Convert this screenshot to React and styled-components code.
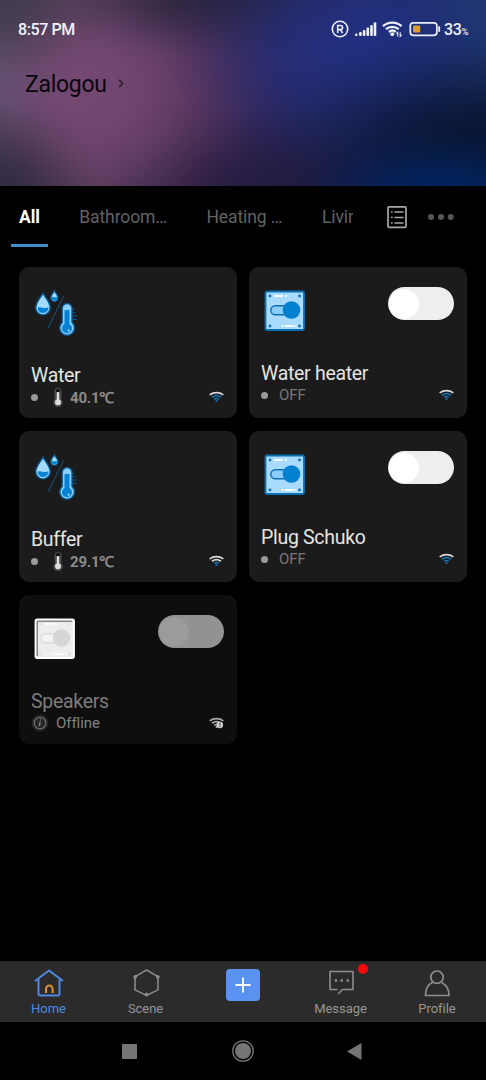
import React from 'react';
import styled, { createGlobalStyle } from 'styled-components';

const GlobalStyle = createGlobalStyle`
  * { box-sizing: border-box; }
  body { margin: 0; background: #000; font-family: Roboto, "Liberation Sans", sans-serif; }
  svg { display: block; flex: none; }
`;

const Screen = styled.div`
  width: 486px;
  height: 1080px;
  display: flex;
  flex-direction: column;
  background: #000;
  overflow: hidden;
`;

// Radial glow with a bell-shaped falloff, so that no edge shows where it ends.
const glow = (rx, ry, x, y, rgb, alpha) => {
  const stops = [0, 0.1, 0.2, 0.3, 0.4, 0.5, 0.6, 0.7, 0.8, 0.9, 1].map((t) => {
    const a = alpha * Math.pow(Math.cos((t * Math.PI) / 2), 2);
    return `rgba(${rgb}, ${a.toFixed(3)}) ${t * 100}%`;
  });
  return `radial-gradient(ellipse ${rx}px ${ry}px at ${x}px ${y}px, ${stops.join(', ')})`;
};

const Hero = styled.header`
  height: 186px;
  flex: none;
  padding: 18px 18px 0;
  background:
    ${glow(170, 80, 440, 200, '0, 38, 104', 0.85)},
    ${glow(260, 130, 486, 145, '6, 20, 48', 0.95)},
    ${glow(200, 150, 360, 50, '32, 50, 138', 0.75)},
    ${glow(190, 80, 205, -10, '34, 34, 56', 0.8)},
    ${glow(130, 90, 0, 0, '55, 52, 66', 0.7)},
    ${glow(110, 110, 0, 196, '44, 38, 60', 0.8)},
    ${glow(190, 100, 280, 200, '34, 26, 62', 0.7)},
    ${glow(185, 210, 92, 90, '122, 72, 116', 0.85)},
    linear-gradient(180deg, transparent, transparent 55%, rgba(20, 16, 36, 0.35)),
    linear-gradient(90deg, #52546c 0, #55445f 80px, #472d54 190px, #30265a 280px, #1f2a62 400px, #20386c 486px);
`;

const StatusBar = styled.div`
  height: 22px;
  display: flex;
  align-items: center;
  color: #f4f2fa;
  font-size: 16px;
  font-weight: 500;
`;

const Clock = styled.span`
  flex: 1;
  letter-spacing: -0.4px;
`;

const StatusIcons = styled.div`
  display: flex;
  align-items: center;
`;

const Charge = styled.span`
  margin-left: 2px;
  font-size: 16px;
  letter-spacing: -0.4px;
  white-space: nowrap;
  small { font-size: 9.5px; }
`;

const HomeName = styled.div`
  display: flex;
  align-items: center;
  gap: 11px;
  margin: 29px 0 0 7px;
  color: #08060b;
  font-size: 23px;
  line-height: 32px;
  letter-spacing: -0.3px;
  svg { margin-top: -3px; }
`;

const TabBar = styled.nav`
  height: 61px;
  flex: none;
  display: flex;
  padding-left: 11px;
`;

const TabList = styled.div`
  width: 342px;
  display: flex;
  gap: 23.4px;
  overflow: hidden;
`;

const Tab = styled.div`
  flex: none;
  height: 61px;
  padding: 19px 8px 0;
  font-size: 17.5px;
  line-height: 24px;
  letter-spacing: -0.08px;
  white-space: nowrap;
  font-weight: ${(p) => (p.$active ? 700 : 400)};
  color: ${(p) => (p.$active ? '#fff' : '#626262')};
  border-bottom: 3px solid ${(p) => (p.$active ? '#3f8fcb' : 'transparent')};
`;

const TabActions = styled.div`
  display: flex;
  align-items: center;
  height: 62px;
  padding-left: 33px;
  gap: 19px;
`;

const Grid = styled.main`
  flex: 1;
  display: grid;
  grid-template-columns: 217.5px 217.5px;
  grid-template-rows: 151px 151px 149px;
  gap: 13px 12.5px;
  padding: 20px 19px;
`;

const Card = styled.section`
  display: flex;
  flex-direction: column;
  border-radius: 10px;
  padding: ${(p) => (p.$sensor ? '22px' : '20px')} 12.5px 0 12px;
  background: ${(p) => (p.$offline ? '#0e0e0e' : '#1b1b1b')};
`;

const CardTop = styled.div`
  display: flex;
  justify-content: space-between;
  height: 74px;
  padding-left: 3px;
  & > svg { margin-top: ${(p) => (p.$sensor ? '0' : '3px')}; }
`;

const DeviceName = styled.div`
  font-size: 19.5px;
  line-height: 26px;
  letter-spacing: -0.3px;
  color: ${(p) => (p.$offline ? '#7c7c7c' : '#e4e4e4')};
`;

const StatusRow = styled.div`
  display: flex;
  align-items: center;
  height: 20px;
  margin-top: -2px;
  color: #7f7f7f;
  font-size: 15px;
`;

const Dot = styled.i`
  width: 7px;
  height: 7px;
  border-radius: 50%;
  background: #9a9a9a;
`;

const Reading = styled.span`
  margin-left: 6px;
  color: #8b8b8b;
  font-weight: 700;
  letter-spacing: -0.2px;
`;

const StateLabel = styled.span`
  margin-left: ${(p) => (p.$offline ? '7px' : '11px')};
  letter-spacing: -0.05px;
  color: ${(p) => (p.$offline ? '#838383' : '#777')};
`;

const Push = styled.span`
  margin-left: auto;
  margin-right: -1px;
  margin-top: -1px;
`;

const Toggle = styled.span`
  width: 66px;
  height: 33px;
  border-radius: 17px;
  display: flex;
  align-items: center;
  padding: 0 1px;
  background: ${(p) => (p.$offline ? '#929292' : '#eee')};
  &::before {
    content: '';
    width: 30px;
    height: 30px;
    border-radius: 50%;
    background: ${(p) => (p.$offline ? '#9b9b9b' : '#fff')};
  }
`;

const BottomNav = styled.nav`
  height: 61px;
  flex: none;
  display: grid;
  grid-template-columns: 97px 97px 98px 97px 96px;
  background: #2b2b2b;
  border-top: 1px solid #242424;
`;

const NavItem = styled.div`
  position: relative;
  display: flex;
  flex-direction: column;
  align-items: center;
  padding-top: 7px;
  font-size: 13px;
  line-height: 16px;
  letter-spacing: -0.05px;
  color: ${(p) => (p.$active ? '#5089e4' : '#969696')};
  svg { margin-bottom: 3px; }
`;

const Badge = styled.i`
  position: absolute;
  top: 2px;
  left: 66px;
  width: 10px;
  height: 10px;
  border-radius: 50%;
  background: #fb0808;
`;

const AddButton = styled.div`
  width: 34px;
  height: 32px;
  border-radius: 4px;
  background: #5a92f2;
  display: grid;
  place-items: center;
  svg { margin: 0; }
`;

const SystemBar = styled.footer`
  height: 58px;
  flex: none;
  display: flex;
  align-items: center;
  gap: 95px;
  padding-left: 122px;
  svg:last-child { margin-left: -2px; }
`;

function SystemIcons() {
  return (
    <StatusIcons>
      <svg width="111" height="22" viewBox="331 18 111 22" fill="none" stroke="#eceeff">
        <circle cx="340" cy="29" r="7.7" strokeWidth="1.6" />
        <path d="M337.7 33v-7.5h2.8a2 2 0 010 4.1h-2.8M340.4 29.6l2.2 3.4" strokeWidth="1.6" />
        <g stroke="none" fill="#f2f2ff">
          <circle cx="356.3" cy="34.7" r="1.3" />
          <rect x="359.1" y="32" width="2.6" height="4" rx="1" />
          <rect x="362.8" y="30" width="2.6" height="6" rx="1" />
          <rect x="366.5" y="27.5" width="2.6" height="8.5" rx="1" />
          <rect x="370.2" y="25" width="2.6" height="11" rx="1" />
          <rect x="373.7" y="22.3" width="2.6" height="13.7" rx="1" />
          <circle cx="392.3" cy="34.2" r="1.9" />
        </g>
        <path d="M383 26.2a14 14 0 0118.6 0M385.9 29.2a10 10 0 0112.8 0M388.9 32a5.5 5.5 0 016.9 0" strokeWidth="2.4" />
        <path d="M397.7 36.6v-4l-1.3 1.3M400.2 32.3v4l1.4-1.4" strokeWidth="1.1" />
        <rect x="410.3" y="22.8" width="26.6" height="12.5" rx="3" strokeWidth="1.7" />
        <rect x="413" y="25.5" width="7.2" height="7" rx="1" fill="#e29c28" stroke="none" />
        <path d="M439.2 27.2v3.8" strokeWidth="1.8" strokeLinecap="round" />
      </svg>
      <Charge>33<small>%</small></Charge>
    </StatusIcons>
  );
}

function WaterIcon() {
  return (
    <svg width="44" height="48" viewBox="34 289 44 48">
      <path d="M43 293.300c2.600 4.800 7.200 8.900 7.200 14.400a7.200 7.200 0 01-14.400 0C35.800 302.200 40.400 298.100 43 293.300z" fill="#a3daff" stroke="#075b97" strokeWidth="1.400" />
      <path d="M37.700 307.500c3-1.300 7 2 10.800-.2 0 3.300-2 5.700-5.400 5.700s-5.400-2.500-5.400-5.500z" fill="#0782d2" />
      <path d="M54.400 290.800c1 2.500 3.500 4.200 3.500 6.900a3.500 3.500 0 01-7 0c0-2.700 2.500-4.400 3.500-6.900z" fill="#a3daff" stroke="#075b97" strokeWidth="1.300" />
      <path d="M51.700 297c1.600-.4 3.500 1 5.400 0 .2 2.400-1 3.600-2.700 3.600s-3-1.300-2.700-3.600z" fill="#0782d2" />
      <path d="M63.700 296.300L48 328" stroke="#174d70" strokeWidth="1.100" />
      <path d="M62.200 308.500a4.900 4.900 0 019.800 0v14a7.300 7.300 0 11-9.800 0z" fill="#8acfff" stroke="#075b97" strokeWidth="1.400" />
      <path d="M64.500 310h5v14a5 5 0 11-5 0z" fill="#0782d2" />
      <circle cx="68.700" cy="330.700" r="1.100" fill="#a3daff" />
      <path d="M72.800 312.500h2.500M72.800 316h4M72.800 319.500h4M72.800 309.500h1.500" stroke="#075b97" strokeWidth="1" />
    </svg>
  );
}

function PlateIcon({ offline }) {
  const c = offline
    ? { edge: '#fff', face: '#ededed', knob: '#d6d6d6', line: '#dcdcdc', shine: '#fafafa', slot: '#f4f4f4' }
    : { edge: '#0b6fb4', face: '#a9dbff', knob: '#0480d0', line: '#0f6fb2', shine: '#f5fcff', slot: '#8dcdfa' };
  return (
    <svg width="42" height="42" viewBox="0 0 42 42">
      <rect x="1.500" y="1.500" width="38.500" height="38.500" rx="1.500" fill={c.face} stroke={c.edge} strokeWidth="1.800" />
      {offline && <path d="M3.200 38V3.200h35" fill="none" stroke="#555" strokeWidth="1" />}
      <path d="M10 6h9M21 6h2M17.500 36h2M21 36h9M31 36h1.500" stroke={c.shine} strokeWidth="2" />
      <g fill={c.line}>
        <circle cx="6" cy="6" r="1.400" />
        <circle cx="35.500" cy="6" r="1.400" />
        <circle cx="6" cy="36" r="1.400" />
        <circle cx="35.500" cy="36" r="1.400" />
      </g>
      <rect x="6.800" y="15.700" width="22" height="9" rx="4.500" fill={c.slot} stroke={c.line} strokeWidth="1.400" />
      <circle cx="27.500" cy="20" r="8.800" fill={c.knob} />
    </svg>
  );
}

const ARCS = [
  'M0.700 4.900a10.500 9.500 0 0113.600 0',
  'M3 7.200a7.300 6.500 0 019 0',
  'M5.200 9.200a4 3.500 0 014.600 0',
];

function WifiMark({ colors, alert }) {
  return (
    <svg width="16" height="13" viewBox="0 0 16 13" fill="none">
      {ARCS.map((d, i) => <path key={d} d={d} stroke={colors[i]} strokeWidth="1.700" />)}
      <circle cx="7.500" cy="11" r="1" fill={colors[2]} />
      {alert && <circle cx="10.800" cy="9" r="3.300" fill="#d0d0d0" />}
      {alert && <path d="M10.900 7v2.400M10.900 10.200v1" stroke="#333" strokeWidth="1" />}
    </svg>
  );
}

function MiniThermometer() {
  return (
    <svg width="12" height="20" viewBox="0 0 12 20">
      <path d="M3 4a3 3 0 016 0v8.500a4.300 4.300 0 11-6 0z" fill="#4c4c4c" stroke="#484848" strokeWidth="1" />
      <path d="M4 5.500V3.500a2 2 0 014 0v2z" fill="#151515" />
      <path d="M6 5v10" stroke="#dedede" strokeWidth="2.400" />
      <circle cx="6" cy="15.300" r="3" fill="#dedede" />
    </svg>
  );
}

const ThermoSlot = styled.span`
  margin-left: 14px;
`;

function InfoIcon() {
  return (
    <svg width="18" height="18" viewBox="0 0 18 18" fill="none">
      <circle cx="9" cy="9" r="8.500" fill="#252525" />
      <circle cx="9" cy="9" r="5.800" stroke="#777" strokeWidth="1.100" />
      <path d="M9.600 5.300l-.2 1.200M9.100 7.800l-.7 4.400" stroke="#888" strokeWidth="1.400" />
    </svg>
  );
}

function SensorCard({ name, value, wifi }) {
  return (
    <Card $sensor>
      <CardTop $sensor><WaterIcon /></CardTop>
      <DeviceName>{name}</DeviceName>
      <StatusRow>
        <Dot />
        <ThermoSlot><MiniThermometer /></ThermoSlot>
        <Reading>{value}</Reading>
        <Push><WifiMark colors={wifi} /></Push>
      </StatusRow>
    </Card>
  );
}

function SwitchCard({ name, state, wifi, offline }) {
  return (
    <Card $offline={offline}>
      <CardTop>
        <PlateIcon offline={offline} />
        <Toggle $offline={offline} />
      </CardTop>
      <DeviceName $offline={offline}>{name}</DeviceName>
      <StatusRow>
        {offline ? <InfoIcon /> : <Dot />}
        <StateLabel $offline={offline}>{state}</StateLabel>
        <Push><WifiMark colors={wifi} alert={offline} /></Push>
      </StatusRow>
    </Card>
  );
}

const BLUE = '#1475b5';
const PALE = '#d9d9d9';

export default function App() {
  return (
    <Screen>
      <GlobalStyle />
      <Hero>
        <StatusBar>
          <Clock>8:57 PM</Clock>
          <SystemIcons />
        </StatusBar>
        <HomeName>
          Zalogou
          <svg width="6" height="9" viewBox="0 0 6 9" fill="none" stroke="#211827" strokeWidth="1.300">
            <path d="M1 .7l3.600 3.800L1 8.300" />
          </svg>
        </HomeName>
      </Hero>

      <TabBar>
        <TabList>
          <Tab $active>All</Tab>
          <Tab>Bathroom…</Tab>
          <Tab>Heating …</Tab>
          <Tab>Living</Tab>
        </TabList>
        <TabActions>
          <svg width="22" height="24" viewBox="0 0 22 24" fill="none" stroke="#a6a6a6">
            <rect x="2" y="1.800" width="18" height="20.500" rx="1" strokeWidth="1.700" />
            <path d="M8.500 7h9M8.500 12.500h9M8.500 18h9M5 7h1.700M5 12.500h1.700M5 18h1.700" strokeWidth="1.400" />
          </svg>
          <svg width="28" height="8" viewBox="0 0 28 8" fill="#565656">
            <circle cx="4" cy="4" r="3" />
            <circle cx="14" cy="4" r="3" />
            <circle cx="23.700" cy="4" r="3" />
          </svg>
        </TabActions>
      </TabBar>

      <Grid>
        <SensorCard name="Water" value="40.1℃" wifi={[PALE, BLUE, BLUE]} />
        <SwitchCard name="Water heater" state="OFF" wifi={[PALE, BLUE, BLUE]} />
        <SensorCard name="Buffer" value="29.1℃" wifi={[PALE, PALE, BLUE]} />
        <SwitchCard name="Plug Schuko" state="OFF" wifi={[PALE, BLUE, BLUE]} />
        <SwitchCard name="Speakers" state="Offline" wifi={['#aaa', '#aaa', '#aaa']} offline />
      </Grid>

      <BottomNav>
        <NavItem $active>
          <svg width="32" height="29" viewBox="0 0 32 29" fill="none" strokeWidth="2">
            <path d="M2 12L16 1.500 30 12M5.500 10.500V25a1.500 1.500 0 001.500 1.500h18a1.500 1.500 0 001.500-1.500V10.500" stroke="#5089e4" strokeLinejoin="round" />
            <path d="M13 24v-4.200a3.300 3.300 0 016.600 0V24" stroke="#dc952c" />
          </svg>
          Home
        </NavItem>
        <NavItem>
          <svg width="32" height="29" viewBox="0 0 32 29" fill="#8e8e8e" stroke="#8e8e8e">
            <path d="M16.500 1L28 7.700v13.200L16.500 26.500 5 20.900V7.700z" fill="none" strokeWidth="1.500" />
            <circle cx="5.200" cy="8" r="1.400" />
            <circle cx="27.800" cy="8" r="1.400" />
            <circle cx="16.500" cy="25.500" r="1.400" />
          </svg>
          Scene
        </NavItem>
        <NavItem>
          <AddButton>
            <svg width="16" height="16" viewBox="0 0 16 16" stroke="#fff" strokeWidth="1.800">
              <path d="M8 .5v15M.5 8h15" />
            </svg>
          </AddButton>
        </NavItem>
        <NavItem>
          <svg width="32" height="29" viewBox="0 0 32 29" fill="none" stroke="#8e8e8e" strokeWidth="1.600">
            <path d="M12.500 20.500H5V2.500h23v18H17.500L13 25" strokeLinejoin="round" />
            <path d="M9.700 11.500h2.400M15.500 11.500h2.400M21.500 11.500h2.400" strokeWidth="2.400" />
          </svg>
          <Badge />
          Message
        </NavItem>
        <NavItem>
          <svg width="32" height="29" viewBox="0 0 32 29" fill="none" stroke="#8e8e8e" strokeWidth="1.700">
            <circle cx="16" cy="8.200" r="6.200" />
            <path d="M11.500 13.500C7 15.500 4.500 19 4.500 26.500H28c0-7.500-3-11-7.500-13" strokeLinejoin="round" />
          </svg>
          Profile
        </NavItem>
      </BottomNav>

      <SystemBar>
        <svg width="15" height="15" viewBox="0 0 15 15"><rect width="15" height="15" rx="1" fill="#757575" /></svg>
        <svg width="22" height="22" viewBox="0 0 22 22">
          <circle cx="11" cy="11" r="10.200" fill="none" stroke="#757575" strokeWidth="1.300" />
          <circle cx="11" cy="11" r="8" fill="#757575" />
        </svg>
        <svg width="15" height="17" viewBox="0 0 15 17"><path d="M0 8.500L14.500 0v17z" fill="#757575" /></svg>
      </SystemBar>
    </Screen>
  );
}
